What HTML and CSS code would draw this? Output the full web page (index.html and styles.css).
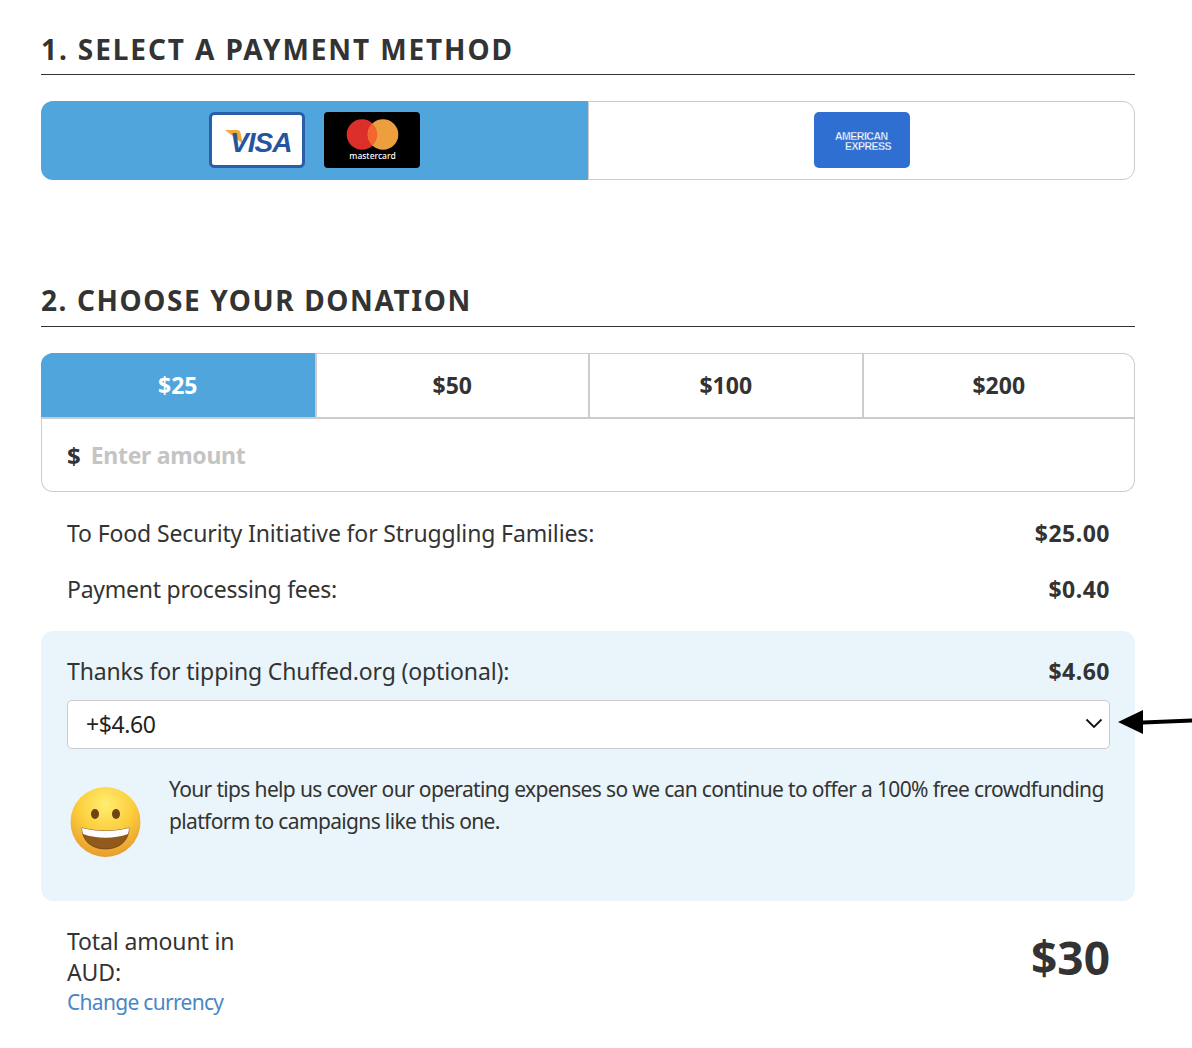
FILE: index.html
```html
<!DOCTYPE html>
<html lang="en">
<head>
    <meta charset="UTF-8">
    <meta name="viewport" content="width=device-width, initial-scale=1.0">
    <title>Donate</title>
    <link rel="stylesheet" href="styles.css">
</head>
<body>
    <div class="page">
        <h2 class="step-title">1. Select a payment method</h2>
        <div class="method-tabs">
            <div class="method-tab active">
                <svg class="card" width="96" height="56" viewBox="0 0 96 56">
                    <rect x="1.500" y="1.500" width="93" height="53" rx="4" fill="#fff" stroke="#2a5ea8" stroke-width="3"/>
                    <path d="M16 18h12c2 0 3 1 3.500 3l2.500 11z" fill="#f2a83b"/>
                    <text x="21" y="40" class="visa-text">VISA</text>
                </svg>
                <svg class="card" width="96" height="56" viewBox="0 0 96 56">
                    <rect width="96" height="56" rx="4" fill="#000"/>
                    <circle cx="38" cy="22.500" r="15.300" fill="#dc2f2a"/>
                    <circle cx="59" cy="22.500" r="15.300" fill="#ee9f3d"/>
                    <path d="M48.500 11.400A15.300 15.300 0 0 1 48.500 33.600A15.300 15.300 0 0 1 48.500 11.400z" fill="#f2672e"/>
                    <text x="48.500" y="47" class="mc-text">mastercard</text>
                </svg>
            </div>
            <div class="method-tab">
                <svg class="card" width="96" height="56" viewBox="0 0 96 56">
                    <rect width="96" height="56" rx="5" fill="#2f6fd1"/>
                    <text x="21" y="28" class="amex-text">AMERICAN</text>
                    <text x="31" y="38" class="amex-text">EXPRESS</text>
                </svg>
            </div>
        </div>

        <h2 class="step-title second">2. Choose your donation</h2>
        <div class="amount-box">
            <div class="amount-tabs">
                <div class="amount-tab active">$25</div>
                <div class="amount-tab">$50</div>
                <div class="amount-tab">$100</div>
                <div class="amount-tab">$200</div>
            </div>
            <div class="amount-input">
                <span class="dollar">$</span>
                <span class="placeholder">Enter amount</span>
            </div>
        </div>

        <div class="line first">
            <span>To Food Security Initiative for Struggling Families:</span>
            <strong>$25.00</strong>
        </div>
        <div class="line fees">
            <span>Payment processing fees:</span>
            <strong>$0.40</strong>
        </div>

        <div class="tip-panel">
            <div class="tip-head">
                <span>Thanks for tipping Chuffed.org (optional):</span>
                <strong>$4.60</strong>
            </div>
            <div class="tip-select">
                <span>+$4.60</span>
                <svg width="18" height="11" viewBox="0 0 18 11"><path d="M1.500 1.500L9 9l7.500-7.500" fill="none" stroke="#111" stroke-width="1.800"/></svg>
            </div>
            <svg class="arrow" width="74" height="26" viewBox="0 0 74 26">
                <path d="M0 13L25 1V11.500L74 9.500V13.500L25 15.500V25z" fill="#000"/>
            </svg>
            <div class="tip-note">
                <svg class="emoji" width="74" height="74" viewBox="0 0 74 74">
                    <defs>
                        <radialGradient id="face" cx="50%" cy="25%" r="80%">
                            <stop offset="0" stop-color="#ffee70"/>
                            <stop offset="0.5" stop-color="#fccd3c"/>
                            <stop offset="1" stop-color="#e5942b"/>
                        </radialGradient>
                    </defs>
                    <circle cx="36.500" cy="37" r="35" fill="url(#face)"/>
                    <ellipse cx="26" cy="29" rx="4" ry="5" fill="#6f4313"/>
                    <ellipse cx="47" cy="29" rx="4" ry="5" fill="#6f4313"/>
                    <path d="M13 43C28 47 45 47 60 43C60 56 50 64 36.500 64C23 64 13 56 13 43z" fill="#8f5a1c" stroke="#6f4313" stroke-width="0.800"/>
                    <path d="M13 43C28 47 45 47 60 43C60 45 59.500 47 59 49C45 54 28 54 14 49C13.500 47 13 45 13 43z" fill="#fff"/>
                </svg>
                <p>Your tips help us cover our operating expenses so we can continue to offer a 100% free crowdfunding platform to campaigns like this one.</p>
            </div>
        </div>

        <div class="total">
            <div class="total-label">
                <div>Total amount in<br>AUD:</div>
                <a class="currency" href="#">Change currency</a>
            </div>
            <div class="total-value">$30</div>
        </div>
    </div>
</body>
</html>
```

FILE: styles.css
```css
* {
    box-sizing: border-box;
}

body {
    margin: 0;
    font-family: "Noto Sans", "Open Sans", sans-serif;
    color: #333;
    background: #fff;
}

.page {
    width: 1094px;
    margin-left: 41px;
    padding-top: 30px;
    height: 1048px;
}

strong {
    letter-spacing: 0.500px;
}

.step-title {
    margin: 0;
    height: 45px;
    line-height: 39px;
    font-size: 28px;
    font-weight: 700;
    letter-spacing: 1.900px;
    text-transform: uppercase;
    color: #333;
    border-bottom: 1px solid #333;
}

.step-title.second {
    margin-top: 101px;
    height: 46px;
    letter-spacing: 1.600px;
}

.method-tabs {
    display: flex;
    height: 79px;
    margin-top: 26px;
}

.method-tab {
    flex: none;
    width: 50%;
    display: flex;
    align-items: center;
    justify-content: center;
    gap: 19px;
    padding-bottom: 2px;
    border: 1px solid #ccc;
    border-radius: 0 12px 12px 0;
}

.method-tab.active {
    background: #4fa5dc;
    border: 0;
    border-radius: 12px 0 0 12px;
}

.card {
    display: block;
}

.visa-text {
    font-family: "Liberation Sans", sans-serif;
    font-size: 28px;
    font-weight: 700;
    font-style: italic;
    fill: #24569f;
    letter-spacing: -1px;
}

.mc-text {
    font-family: "Noto Sans", sans-serif;
    font-size: 8.500px;
    font-weight: 500;
    fill: #fff;
    text-anchor: middle;
}

.amex-text {
    font-family: "Liberation Sans", sans-serif;
    font-size: 10.500px;
    font-weight: 700;
    fill: #fff;
    stroke: #2f6fd1;
    stroke-width: 0.300px;
    letter-spacing: -0.500px;
}

.amount-box {
    margin-top: 26px;
    height: 139px;
}

.amount-tabs {
    display: flex;
    height: 66px;
}

.amount-tab {
    flex: none;
    width: 25%;
    display: flex;
    align-items: center;
    justify-content: center;
    padding-bottom: 2px;
    font-size: 23px;
    font-weight: 700;
    color: #333;
    border-top: 1px solid #ccc;
    border-left: 2px solid #ccc;
    border-bottom: 2px solid #ccc;
}

.amount-tab:first-child {
    border-left: 0;
    border-top-color: #4fa5dc;
    border-radius: 12px 0 0 0;
}

.amount-tab:last-child {
    border-right: 1px solid #ccc;
    border-radius: 0 12px 0 0;
}

.amount-tab.active {
    background: #4fa5dc;
    color: #fff;
}

.amount-input {
    display: flex;
    align-items: center;
    gap: 10px;
    height: 73px;
    padding-left: 25px;
    font-size: 23px;
    font-weight: 700;
    border: 1px solid #ccc;
    border-top: 0;
    border-radius: 0 0 12px 12px;
}

.dollar {
    font-size: 24px;
}

.placeholder {
    color: #c4c4c4;
    letter-spacing: -0.300px;
}

.line {
    display: flex;
    justify-content: space-between;
    align-items: center;
    height: 56px;
    padding: 0 25px 0 26px;
    font-size: 23px;
    letter-spacing: -0.130px;
}

.line.first {
    margin-top: 13px;
}

.line.fees span {
    letter-spacing: -0.250px;
}

.tip-panel {
    position: relative;
    height: 270px;
    margin-top: 14px;
    padding: 19px 25px 0 26px;
    background: #e9f5fa;
    border-radius: 12px;
    font-size: 23px;
    letter-spacing: -0.140px;
}

.tip-head {
    display: flex;
    justify-content: space-between;
    align-items: center;
    height: 42px;
}

.tip-select {
    display: flex;
    justify-content: space-between;
    align-items: center;
    height: 49px;
    margin-top: 8px;
    padding: 0 6px 2px 18px;
    background: #fff;
    border: 1px solid #ccc;
    border-radius: 5px;
    color: #222;
    letter-spacing: -0.400px;
}

.arrow {
    position: absolute;
    left: 1077px;
    top: 78px;
}

.tip-note {
    display: flex;
    align-items: flex-start;
    gap: 26px;
    margin-top: 24px;
}

.emoji {
    flex: none;
    margin-top: 12px;
    margin-left: 2px;
}

.tip-note p {
    margin: 0;
    font-size: 21px;
    line-height: 32px;
    letter-spacing: -0.650px;
}

.total {
    display: flex;
    justify-content: space-between;
    align-items: flex-start;
    margin-top: 25px;
    padding: 0 25px 0 26px;
}

.total-label {
    font-size: 23px;
    line-height: 31px;
    letter-spacing: -0.130px;
}

.currency {
    display: block;
    font-size: 21px;
    line-height: 29px;
    letter-spacing: -0.700px;
    color: #4a86c5;
    text-decoration: none;
}

.total-value {
    font-size: 46px;
    line-height: 62px;
    font-weight: 700;
}
```
